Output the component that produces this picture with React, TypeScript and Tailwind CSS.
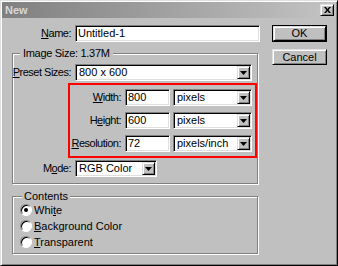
import React from "react";

const sunken =
  "bg-white border border-t-[#808080] border-l-[#808080] border-b-white border-r-white shadow-[inset_1px_1px_0_#000,inset_-1px_-1px_0_#dfdfdf]";
const raised =
  "bg-[#c0c0c0] border border-t-[#dfdfdf] border-l-[#dfdfdf] border-b-black border-r-black shadow-[inset_1px_1px_0_#fff,inset_-1px_-1px_0_#808080]";

function U({ children }: { children: React.ReactNode }) {
  return <span className="underline underline-offset-[1px]">{children}</span>;
}

function Field({ w, text }: { w: string; text: string }) {
  return (
    <div className={`${sunken} ${w} h-[17px] flex items-center pl-[2px] text-[11px] leading-none whitespace-nowrap`}>
      {text}
    </div>
  );
}

function Select({ w, text }: { w: string; text: string }) {
  return (
    <div className={`${sunken} ${w} h-[17px] flex items-center pl-[3px] pr-[1px] text-[11px] leading-none whitespace-nowrap`}>
      <span className="flex-1">{text}</span>
      <div className={`${raised} w-[13px] h-[13px] flex items-center justify-center`}>
        <svg width="7" height="4" viewBox="0 0 7 4">
          <path d="M0 0h7L3.5 4z" fill="#000" />
        </svg>
      </div>
    </div>
  );
}

function Label({ w, children }: { w: string; children: React.ReactNode }) {
  return (
    <div className={`${w} flex justify-end whitespace-nowrap text-[11px] leading-none tracking-[-0.5px]`}>
      <span>{children}</span>
    </div>
  );
}

function Radio({ checked, children }: { checked?: boolean; children: React.ReactNode }) {
  return (
    <div className="h-[14px] flex items-center gap-[2px]">
      <div className="w-[12px] h-[12px] rounded-full bg-white border border-t-[#808080] border-l-[#808080] border-b-white border-r-white shadow-[inset_1px_1px_0_#000] flex items-center justify-center">
        {checked && <div className="w-[4px] h-[4px] rounded-full bg-black" />}
      </div>
      <span className="text-[11px] leading-none whitespace-nowrap">{children}</span>
    </div>
  );
}

export default function App() {
  return (
    <div
      className="w-[338px] h-[266px] bg-[#c0c0c0] border border-t-[#dfdfdf] border-l-[#dfdfdf] border-b-black border-r-black shadow-[inset_1px_1px_0_#fff,inset_-1px_-1px_0_#808080] p-[1px] text-black"
      style={{ fontFamily: '"Liberation Sans", Arial, sans-serif' }}
    >
      {/* Title bar */}
      <div className="h-[16px] bg-gradient-to-r from-[#808080] to-[#c4c4c4] flex items-center justify-between pl-[3px] pr-[2px]">
        <span className="text-[11px] font-bold text-[#d8d8d8] leading-none">New</span>
        <div className={`${raised} w-[14px] h-[12px] flex items-center justify-center`}>
          <svg width="7" height="6" viewBox="0 0 7 6">
            <path d="M0 0h2l1.5 2 1.5-2h2L4.5 3 7 6H5L3.5 4 2 6H0l2.5-3z" fill="#000" />
          </svg>
        </div>
      </div>

      <div className="flex pt-[7px] pl-[10px]">
        {/* Left column */}
        <div className="w-[248px] flex flex-col">
          <div className="flex items-center gap-[4px]">
            <Label w="w-[59px]">
              <U>N</U>ame:
            </Label>
            <Field w="w-[185px]" text="Untitled-1" />
          </div>

          {/* Image Size group */}
          <div className="relative mt-[11px] w-[246px] h-[131px] border border-[#808080] shadow-[1px_1px_0_#fff,inset_1px_1px_0_#fff] pt-[10px] pb-[5px]">
            <span className="absolute -top-[7px] left-[7px] bg-[#c0c0c0] px-[3px] text-[11px] leading-[13px] whitespace-nowrap tracking-[-0.3px]">
              Image Size: 1.37M
            </span>
            <div className="flex items-center gap-[4px]">
              <Label w="w-[58px]">
                <U>P</U>reset Sizes:
              </Label>
              <Select w="w-[177px]" text="800 x 600" />
            </div>

            <div className="mt-[2px] ml-[55px] w-[189px] h-[75px] border-2 border-[#ff0000] pt-[4px] flex flex-col gap-[6px]">
              <div className="flex items-center">
                <Label w="w-[51px]">
                  <U>W</U>idth:
                </Label>
                <div className="w-[4px]" />
                <Field w="w-[45px]" text="800" />
                <div className="w-[3px]" />
                <Select w="w-[79px]" text="pixels" />
              </div>
              <div className="flex items-center">
                <Label w="w-[51px]">
                  H<U>e</U>ight:
                </Label>
                <div className="w-[4px]" />
                <Field w="w-[45px]" text="600" />
                <div className="w-[3px]" />
                <Select w="w-[79px]" text="pixels" />
              </div>
              <div className="flex items-center">
                <Label w="w-[51px]">
                  <U>R</U>esolution:
                </Label>
                <div className="w-[4px]" />
                <Field w="w-[45px]" text="72" />
                <div className="w-[3px]" />
                <Select w="w-[79px]" text="pixels/inch" />
              </div>
            </div>

            <div className="mt-[2px] flex items-center gap-[4px]">
              <Label w="w-[58px]">
                M<U>o</U>de:
              </Label>
              <Select w="w-[82px]" text="RGB Color" />
            </div>
          </div>

          {/* Contents group */}
          <div className="relative mt-[12px] w-[246px] h-[58px] border border-[#808080] shadow-[1px_1px_0_#fff,inset_1px_1px_0_#fff] pt-[6px] pl-[7px] flex flex-col gap-[2px]">
            <span className="absolute -top-[7px] left-[9px] bg-[#c0c0c0] px-[2px] text-[11px] leading-[13px] whitespace-nowrap">
              Contents
            </span>
            <Radio checked>
              Whi<U>t</U>e
            </Radio>
            <Radio>
              <U>B</U>ackground Color
            </Radio>
            <Radio>
              <U>T</U>ransparent
            </Radio>
          </div>
        </div>

        {/* Right column */}
        <div className="ml-[12px] w-[55px] flex flex-col">
          <div className="h-[17px] border border-black">
            <div className={`${raised} h-full flex items-center justify-center text-[11px] leading-none`}>OK</div>
          </div>
          <div className={`${raised} mt-[7px] h-[16px] flex items-center justify-center text-[11px] leading-none`}>
            Cancel
          </div>
        </div>
      </div>
    </div>
  );
}
